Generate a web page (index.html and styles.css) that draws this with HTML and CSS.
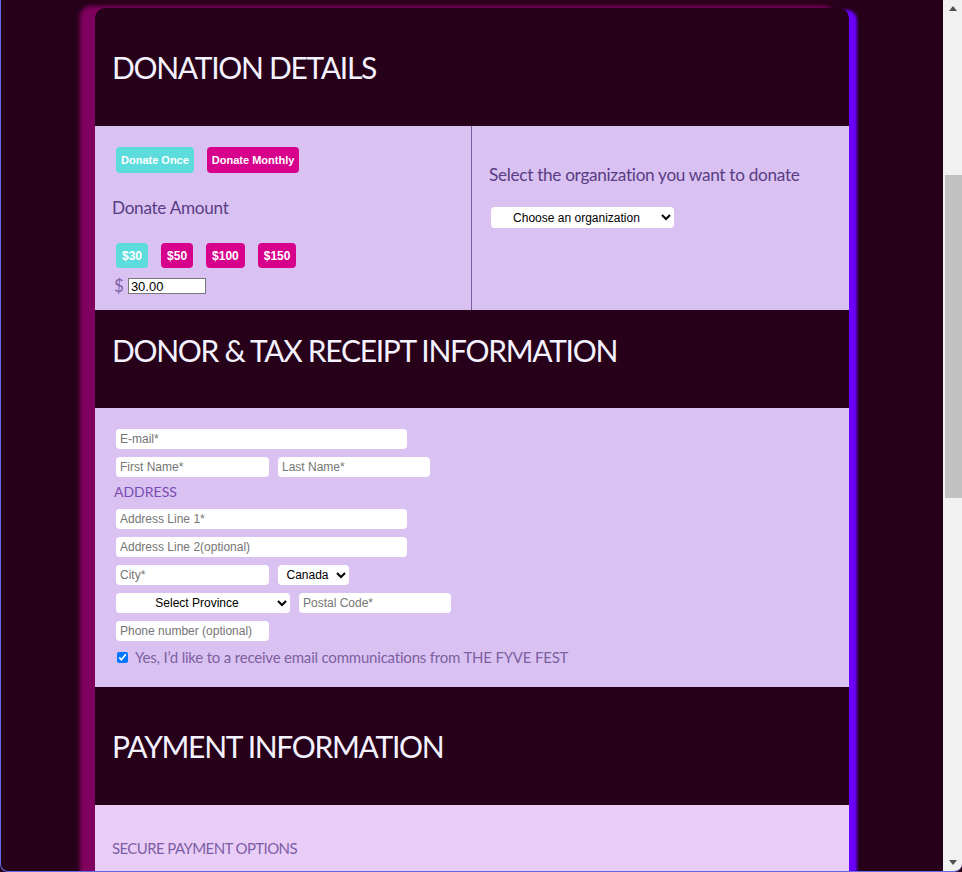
FILE: index.html
```html
<!DOCTYPE html>
<html lang="en">
<head>
<meta charset="utf-8">
<title>Donate</title>
<link rel="stylesheet" href="styles.css">
</head>
<body>
<div class="frame">
  <div class="viewport">
    <div class="card">
      <div class="head"><h1>DONATION DETAILS</h1></div>
      <div class="sec split">
        <div class="col left">
          <div class="btn-row">
            <button class="btn cyan">Donate Once</button>
            <button class="btn pink">Donate Monthly</button>
          </div>
          <p class="label amount-label">Donate Amount</p>
          <div class="btn-row amounts">
            <button class="btn cyan">$30</button>
            <button class="btn pink">$50</button>
            <button class="btn pink">$100</button>
            <button class="btn pink">$150</button>
          </div>
          <div class="custom">
            <span class="dollar">$</span>
            <input class="amount-input" type="text" value="30.00">
          </div>
        </div>
        <div class="col right">
          <p class="label org-label">Select the organization you want to donate</p>
          <select class="sel org-sel"><option>Choose an organization</option></select>
        </div>
      </div>
      <div class="head head-short"><h1>DONOR &amp; TAX RECEIPT INFORMATION</h1></div>
      <div class="sec form">
        <div class="row"><input class="field w291" placeholder="E-mail*"></div>
        <div class="row">
          <input class="field w153" placeholder="First Name*">
          <input class="field w152" placeholder="Last Name*">
        </div>
        <p class="addr">ADDRESS</p>
        <div class="row"><input class="field w291" placeholder="Address Line 1*"></div>
        <div class="row"><input class="field w291" placeholder="Address Line 2(optional)"></div>
        <div class="row">
          <input class="field w153" placeholder="City*">
          <select class="sel country"><option>Canada</option></select>
        </div>
        <div class="row">
          <select class="sel province"><option>Select Province</option></select>
          <input class="field w152" placeholder="Postal Code*">
        </div>
        <div class="row"><input class="field w153" placeholder="Phone number (optional)"></div>
        <label class="consent"><input type="checkbox" checked><span>Yes, I’d like to a receive email communications from THE FYVE FEST</span></label>
      </div>
      <div class="head"><h1>PAYMENT INFORMATION</h1></div>
      <div class="sec pay">
        <p class="secure">SECURE PAYMENT OPTIONS</p>
      </div>
    </div>
  </div>
  <div class="scrollbar">
    <div class="arrow up"></div>
    <div class="track">
      <div class="thumb"></div>
    </div>
    <div class="arrow down"></div>
  </div>
</div>
</body>
</html>
```
FILE: styles.css
```css
* { box-sizing: border-box; }
html, body {
  margin: 0;
  padding: 0;
  height: 872px;
  overflow: hidden;
  background: #27001a;
}
.frame {
  display: flex;
  height: 872px;
  border-left: 1px solid #6a6ae8;
  border-bottom: 1px solid #6a6ae8;
  border-radius: 0 0 8px 8px;
  overflow: hidden;
}
.viewport {
  flex: 1;
  overflow: hidden;
  padding-top: 8px;
}
.card {
  width: 754px;
  margin: 0 auto 0 94px;
  border-radius: 10px 10px 0 0;
  background: #27001a;
  box-shadow: -15px -2px 4px #80005f, 8px 2px 3px #6b00ff;
  font-family: "Lato", "Open Sans", sans-serif;
}
.head {
  height: 118px;
  display: flex;
  align-items: center;
  padding: 0 17px;
  border-radius: 10px 10px 0 0;
}
.head-short {
  height: 98px;
  align-items: flex-start;
  padding-top: 22px;
  border-radius: 0;
}
.head h1 {
  margin: 0;
  font-family: "Lato", sans-serif;
  font-weight: 400;
  font-size: 30px;
  line-height: 36px;
  letter-spacing: -1.3px;
  color: #f4f2ff;
}
.sec {
  background: #d9c2f2;
}
.split {
  display: flex;
  height: 184px;
}
.col { flex: 1; }
.left {
  width: 377px;
  flex: none;
  padding: 21px 0 0 21px;
  border-right: 1px solid #7a5a9e;
}
.right {
  padding: 38px 0 0 17px;
}
.btn-row {
  display: flex;
  gap: 13px;
}
.btn {
  border: none;
  border-radius: 4px;
  height: 26px;
  padding: 0 5px;
  font-family: "Liberation Sans", Arial, sans-serif;
  font-weight: 700;
  font-size: 11px;
  color: #fff;
}
.amounts .btn { height: 25px; padding: 0 6px; font-size: 12px; }
.cyan { background: #5cdcdc; }
.pink { background: #d6008c; }
.label {
  margin: 0;
  font-size: 17.2px;
  line-height: 22px;
  color: #5a3c84;
  letter-spacing: -0.3px;
}
.amount-label {
  margin: 24px 0 0 -4px;
}
.amounts { margin-top: 24px; }
.custom {
  display: flex;
  align-items: center;
  margin: 10px 0 0 -2px;
  gap: 4px;
}
.dollar {
  font-size: 17px;
  color: #7a5ea6;
  line-height: 16px;
}
.amount-input {
  width: 78px;
  height: 16px;
  border: 1px solid #767676;
  padding: 0 2px;
  font-family: "Liberation Sans", Arial, sans-serif;
  font-size: 13px;
  color: #000;
}
.org-sel {
  margin: 21px 0 0 2px;
  width: 183px;
}
.sel {
  height: 21px;
  border: none;
  border-radius: 4px;
  background: #fff;
  font-family: "Liberation Sans", Arial, sans-serif;
  font-size: 12px;
  color: #000;
  text-align: center;
  text-align-last: center;
}
.form {
  height: 279px;
  padding: 21px 0 0 21px;
}
.row {
  display: flex;
  gap: 9px;
  margin-bottom: 8px;
}
.field {
  height: 20px;
  border: none;
  border-radius: 4px;
  background: #fff;
  padding: 0 4px;
  font-family: "Liberation Sans", Arial, sans-serif;
  font-size: 12px;
  color: #000;
}
.field::placeholder { color: #757575; }
.w291 { width: 291px; }
.w153 { width: 153px; }
.w152 { width: 152px; }
.country { width: 71px; height: 20px; }
.province { width: 174px; height: 20px; }
.addr {
  margin: -1px 0 9px -2px;
  font-size: 14px;
  line-height: 16px;
  color: #7a4ab2;
}
.consent {
  display: flex;
  align-items: center;
  gap: 7px;
  margin-top: -1px;
  font-size: 15px;
  color: #7d5fa2;
  letter-spacing: -0.2px;
}
.consent input {
  margin: 0 0 0 1px;
  width: 11px;
  height: 11px;
}
.pay {
  background: #eacdf7;
  height: 120px;
  padding: 34px 0 0 17px;
}
.secure {
  margin: 0;
  font-size: 15px;
  line-height: 18px;
  color: #7a5ea6;
  letter-spacing: -0.6px;
}
.scrollbar {
  width: 19px;
  background: #f1f1f1;
  display: flex;
  flex-direction: column;
}
.arrow {
  height: 17px;
  display: flex;
  align-items: center;
  justify-content: center;
}
.arrow::before {
  content: "";
  border-left: 4px solid transparent;
  border-right: 4px solid transparent;
}
.up::before { border-bottom: 5px solid #505050; }
.down::before { border-top: 5px solid #505050; }
.track {
  flex: 1;
  padding: 158px 0 0 2px;
}
.thumb {
  height: 323px;
  background: #c1c1c1;
}
```
